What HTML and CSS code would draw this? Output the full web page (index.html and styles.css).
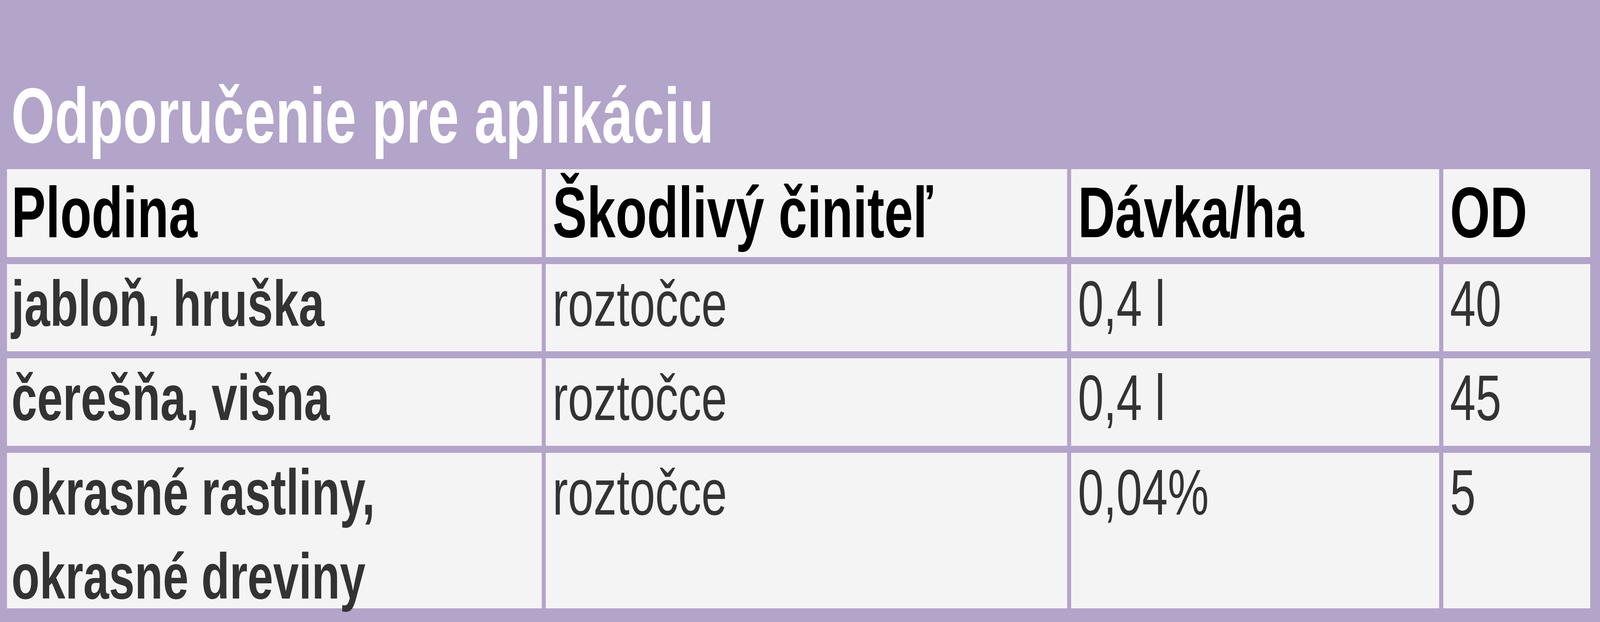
FILE: index.html
```html
<!DOCTYPE html>
<html lang="sk">
<head>
<meta charset="utf-8">
<title>Odporučenie pre aplikáciu</title>
<link rel="stylesheet" href="styles.css">
</head>
<body>
<div class="frame">
<main class="slide">
  <h1 class="title">Odporučenie pre aplikáciu</h1>
  <div class="grid">
    <div class="cell head"><div class="txt">Plodina</div></div>
    <div class="cell head c2"><div class="txt">Škodlivý činiteľ</div></div>
    <div class="cell head c3"><div class="txt">Dávka/ha</div></div>
    <div class="cell head c4"><div class="txt">OD</div></div>

    <div class="cell body first"><div class="txt">jabloň, hruška</div></div>
    <div class="cell body c2"><div class="txt">roztočce</div></div>
    <div class="cell body c3"><div class="txt">0,4 l</div></div>
    <div class="cell body c4"><div class="txt">40</div></div>

    <div class="cell body first"><div class="txt">čerešňa, višna</div></div>
    <div class="cell body c2"><div class="txt">roztočce</div></div>
    <div class="cell body c3"><div class="txt">0,4 l</div></div>
    <div class="cell body c4"><div class="txt">45</div></div>

    <div class="cell body first"><div class="txt">okrasné rastliny,<br>okrasné dreviny</div></div>
    <div class="cell body c2"><div class="txt">roztočce</div></div>
    <div class="cell body c3"><div class="txt">0,04%</div></div>
    <div class="cell body c4"><div class="txt">5</div></div>
  </div>
</main>
</div>
</body>
</html>
```

FILE: styles.css
```css
html, body {
  margin: 0;
  padding: 0;
  overflow: hidden;
}
body {
  background: #b3a4c9;
  height: 1592px;
  font-family: "Liberation Sans", Arial, sans-serif;
}
.frame {
  width: 100%;
  height: 1592px;
  overflow: hidden;
}
.slide {
  box-sizing: border-box;
  width: 5719px;
  height: 1592px;
  padding: 181px 0 0 40px;
  transform: scaleX(0.71621);
  transform-origin: 0 0;
}
.title {
  margin: 0 0 22px 0;
  font-size: 200px;
  line-height: 230px;
  font-weight: 700;
  color: #ffffff;
  white-space: nowrap;
}
.grid {
  margin-left: -15px;
  display: grid;
  grid-template-columns: 1911px 1863px 1315px 525px;
  grid-template-rows: 225px 223px 224px 398px;
  column-gap: 15px;
  row-gap: 18px;
}
.cell {
  background: #f4f4f4;
  box-shadow: inset 0 0 0 3px #faf2f9;
  padding-left: 16px;
  white-space: nowrap;
}
.c2, .c3, .c4 {
  padding-left: 24px;
}
.head {
  font-size: 184px;
  line-height: 220px;
  font-weight: 700;
  color: #000000;
}
.body {
  font-size: 165px;
  line-height: 215px;
  color: #333333;
}
.body .txt {
  margin-top: -6px;
}
.first {
  font-weight: 700;
}
```
